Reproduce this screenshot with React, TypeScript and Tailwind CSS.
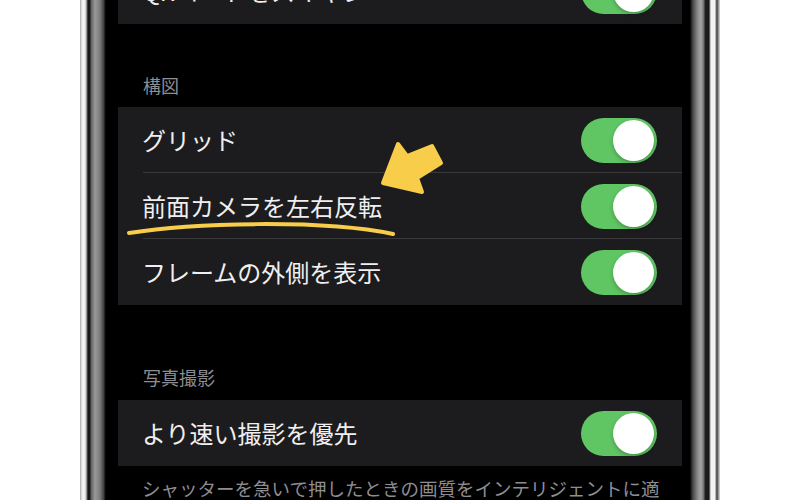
import React from "react";

function Toggle() {
  return (
    <div className="relative w-[76px] h-[45px] rounded-full bg-[#5fc663] shrink-0">
      <div className="absolute right-[3px] top-[2px] w-[41px] h-[41px] rounded-full bg-white shadow-[0_2px_4px_rgba(0,0,0,0.25)]" />
    </div>
  );
}

function Row({ label, sep }: { label: string; sep?: boolean }) {
  return (
    <div className="relative h-[66px] shrink-0 flex items-center justify-between pl-[24px] pr-[25px]">
      <span className="text-[24px] leading-[30px] text-[#efeff1]">{label}</span>
      <Toggle />
      {sep && <div className="absolute left-[25px] right-0 bottom-0 h-px bg-[#38383b]" />}
    </div>
  );
}

export default function App() {
  return (
    <div className="relative w-[800px] h-[500px] overflow-hidden bg-white font-['Noto_Sans_CJK_JP','Noto_Sans',sans-serif]">
      <div className="flex h-full pl-[80px]">
        {/* left frame */}
        <div className="w-[38px] h-full shrink-0 bg-[linear-gradient(to_right,#a8a8a8_0px,#e8e8e8_2px,#fafafa_4px,#c8c8c8_6px,#6a6a6a_7px,#141414_8px,#1a1a1a_10px,#5e5e5e_11px,#9a9a9a_15px,#7a7a7a_20px,#3c3c3c_24px,#101010_25px,#000_26px,#000_38px)]" />
        {/* screen */}
        <div className="w-[564px] h-full shrink-0 overflow-hidden bg-black flex flex-col">
          <div className="-mt-[42px] shrink-0 bg-[#1c1c1e]">
            <Row label="QRコードをスキャン" />
          </div>
          <div className="h-[83px] shrink-0 flex items-end pl-[25px] pb-[9px]">
            <span className="text-[18px] leading-[26px] text-[#8d8d92]">構図</span>
          </div>
          <div className="shrink-0 bg-[#1c1c1e]">
            <Row label="グリッド" sep />
            <Row label="前面カメラを左右反転" sep />
            <Row label="フレームの外側を表示" />
          </div>
          <div className="h-[95px] shrink-0 flex items-end pl-[25px] pb-[10px]">
            <span className="text-[18px] leading-[26px] text-[#8d8d92]">写真撮影</span>
          </div>
          <div className="shrink-0 bg-[#1c1c1e]">
            <Row label="より速い撮影を優先" />
          </div>
          <div className="shrink-0 pt-[9px] pl-[24px] pr-[8px]">
            <p className="text-[18.5px] leading-[26px] text-[#8d8d92]">
              シャッターを急いで押したときの画質をインテリジェントに適応させます。
            </p>
          </div>
        </div>
        {/* right frame */}
        <div className="w-[38px] h-full shrink-0 bg-[linear-gradient(to_right,#000_0px,#000_8px,#1c1c1c_9px,#4a4a4a_11px,#8e8e8e_16px,#a4a4a4_19px,#6a6a6a_22px,#202020_23px,#161616_27px,#9a9a9a_28px,#f4f4f4_29px,#f4f4f4_33px,#7a7a7a_34px,#444_35px,#b0b0b0_37px,#ddd_38px)]" />
      </div>

      {/* annotations */}
      <svg className="absolute left-0 top-0" width="800" height="500" viewBox="0 0 800 500">
        <path
          d="M398 144 L407 156 L432 146 L441 163 L417 178 L422 192 L383 183 Z"
          fill="#f7cd4a"
          stroke="#f7cd4a"
          strokeWidth="4"
          strokeLinejoin="round"
        />
        <path
          d="M129 233 C 190 223, 320 219, 393 234"
          fill="none"
          stroke="#f7cd4a"
          strokeWidth="4"
          strokeLinecap="round"
        />
      </svg>
    </div>
  );
}
